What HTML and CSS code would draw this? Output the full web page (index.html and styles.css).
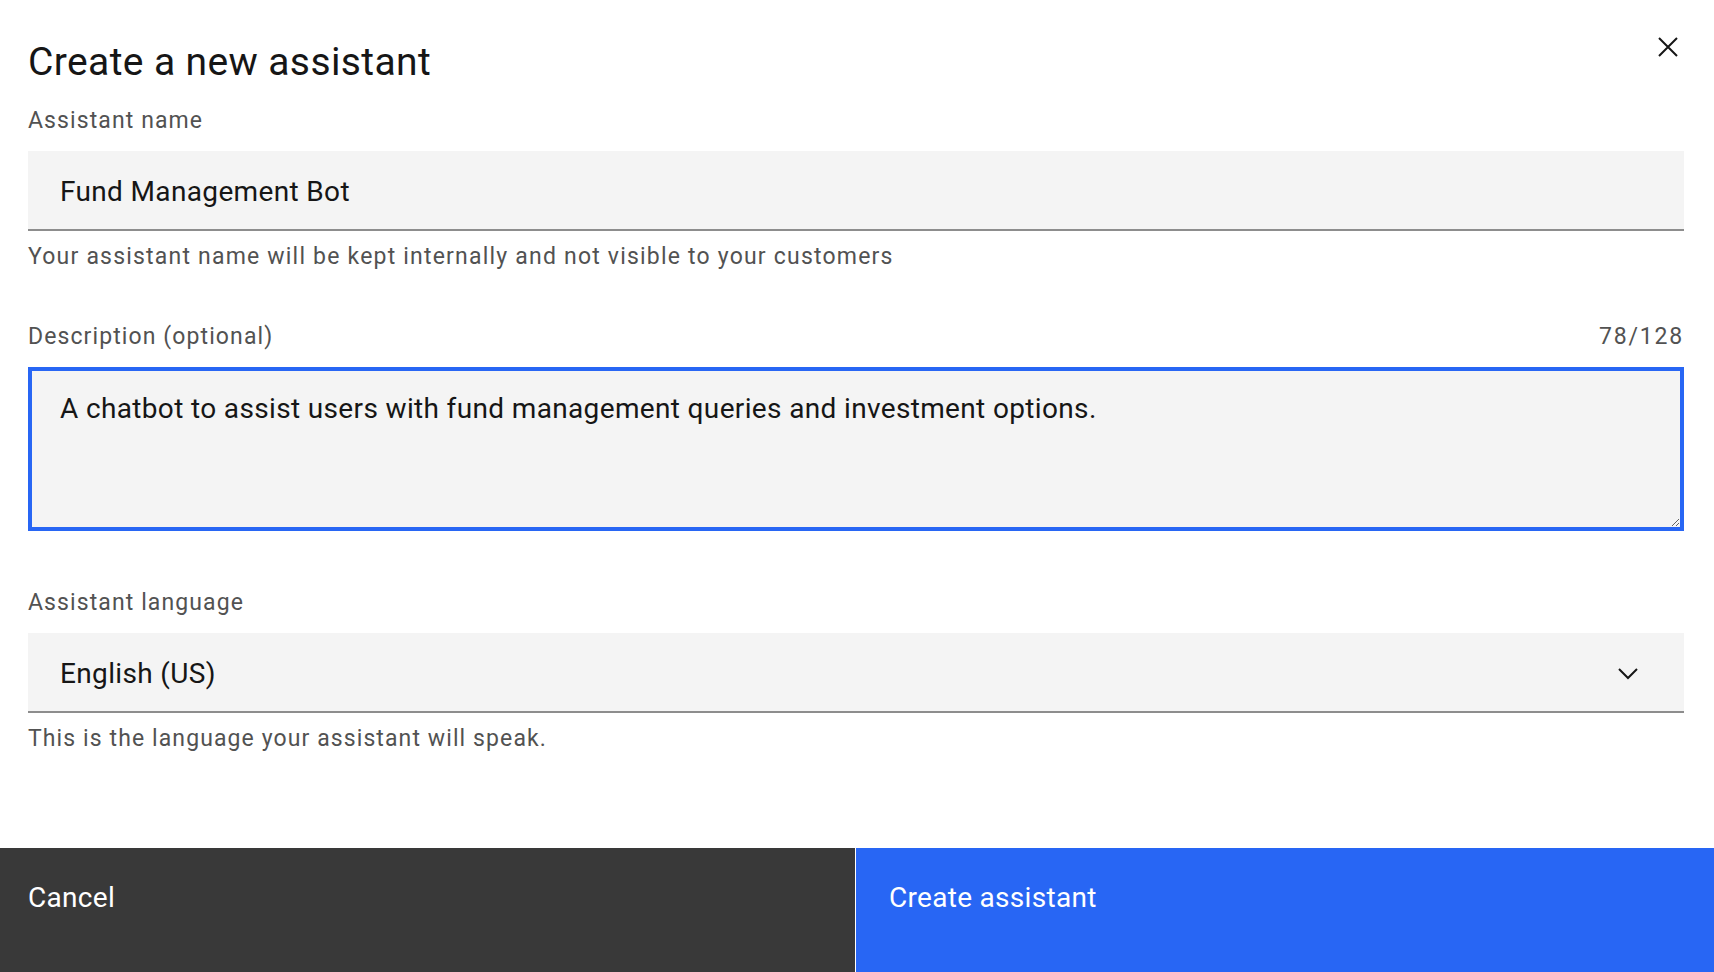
FILE: index.html
```html
<!DOCTYPE html>
<html lang="en">
<head>
<meta charset="utf-8">
<title>Create a new assistant</title>
<link rel="stylesheet" href="styles.css">
</head>
<body>
<div class="modal">
  <div class="content">
    <div class="header">
      <h1 class="title">Create a new assistant</h1>
      <button class="close" aria-label="Close">
        <svg width="20" height="20" viewBox="0 0 20 20"><path d="M1 1 L19 19 M19 1 L1 19" stroke="#161616" stroke-width="2" fill="none"/></svg>
      </button>
    </div>

    <label class="label first">Assistant name</label>
    <input class="field" type="text" value="Fund Management Bot">
    <div class="helper">Your assistant name will be kept internally and not visible to your customers</div>

    <div class="label-row">
      <label class="label">Description (optional)</label>
      <span class="counter">78/128</span>
    </div>
    <textarea class="area">A chatbot to assist users with fund management queries and investment options.</textarea>

    <label class="label lang">Assistant language</label>
    <div class="select">
      <span class="select-value">English (US)</span>
      <svg class="chev" width="20" height="12" viewBox="0 0 20 12"><path d="M1 1 L10 10 L19 1" stroke="#161616" stroke-width="2" fill="none"/></svg>
    </div>
    <div class="helper lang-help">This is the language your assistant will speak.</div>
  </div>

  <div class="footer">
    <button class="btn btn-secondary">Cancel</button>
    <button class="btn btn-primary">Create assistant</button>
  </div>
</div>
</body>
</html>
```

FILE: styles.css
```css
* { box-sizing: border-box; }
html, body { margin: 0; padding: 0; height: 100%; }
body {
  font-family: Roboto, "Liberation Sans", sans-serif;
  color: #161616;
  background: #ffffff;
}
.modal {
  height: 100vh;
  display: flex;
  flex-direction: column;
}
.content {
  padding: 0 30px 0 28px;
  display: flex;
  flex-direction: column;
}
.header {
  display: flex;
  justify-content: space-between;
  align-items: flex-start;
}
.title {
  margin: 38px 0 0 0;
  font-size: 39px;
  line-height: 48px;
  font-weight: 400;
  letter-spacing: 0.38px;
  color: #161616;
}
.close {
  margin: 37px 6px 0 0;
  padding: 0;
  border: 0;
  background: none;
  width: 20px;
  height: 20px;
  display: block;
}
.close svg { display: block; }
.label {
  display: block;
  font-size: 23px;
  line-height: 28px;
  color: #525252;
  letter-spacing: 1.1px;
}
.label.first { margin-top: 21px; }
.label.lang { margin-top: 58px; }
.label-row {
  margin-top: 52px;
  display: flex;
  justify-content: space-between;
}
.counter {
  font-size: 23px;
  line-height: 28px;
  color: #525252;
  letter-spacing: 1.8px;
}
.field {
  margin-top: 16px;
  display: block;
  width: 100%;
  height: 80px;
  border: 0;
  border-bottom: 2px solid #8d8d8d;
  background: #f4f4f4;
  font-family: inherit;
  font-size: 28px;
  color: #161616;
  padding: 2px 32px 0;
  outline: none;
  letter-spacing: 0.35px;
}
.helper {
  margin-top: 12px;
  font-size: 23px;
  line-height: 28px;
  color: #525252;
  letter-spacing: 1.2px;
}
.helper.lang-help { margin-top: 12px; letter-spacing: 1.1px; }
.area {
  margin-top: 16px;
  display: block;
  width: 100%;
  height: 164px;
  border: 4px solid #2866f4;
  background: #f4f4f4;
  font-family: inherit;
  font-size: 28px;
  line-height: 36px;
  color: #161616;
  padding: 20px 28px;
  outline: none;
  resize: vertical;
  letter-spacing: 0.35px;
}
.select {
  margin-top: 16px;
  height: 80px;
  background: #f4f4f4;
  border-bottom: 2px solid #8d8d8d;
  display: flex;
  align-items: center;
  justify-content: space-between;
  padding: 4px 46px 0 32px;
}
.select-value {
  font-size: 28px;
  line-height: 36px;
  letter-spacing: 0.35px;
}
.chev { display: block; }
.footer {
  margin-top: auto;
  height: 124px;
  display: grid;
  grid-template-columns: calc(50% - 2px) 1fr;
  gap: 1px;
}
.btn {
  border: 0;
  margin: 0;
  text-align: left;
  font-family: inherit;
  font-size: 28px;
  line-height: 36px;
  letter-spacing: 0.3px;
  color: #ffffff;
  padding: 32px 28px 0;
  display: flex;
  align-items: flex-start;
}
.btn-secondary { background: #393939; }
.btn-primary { background: #2866f4; padding-left: 33px; }
```
